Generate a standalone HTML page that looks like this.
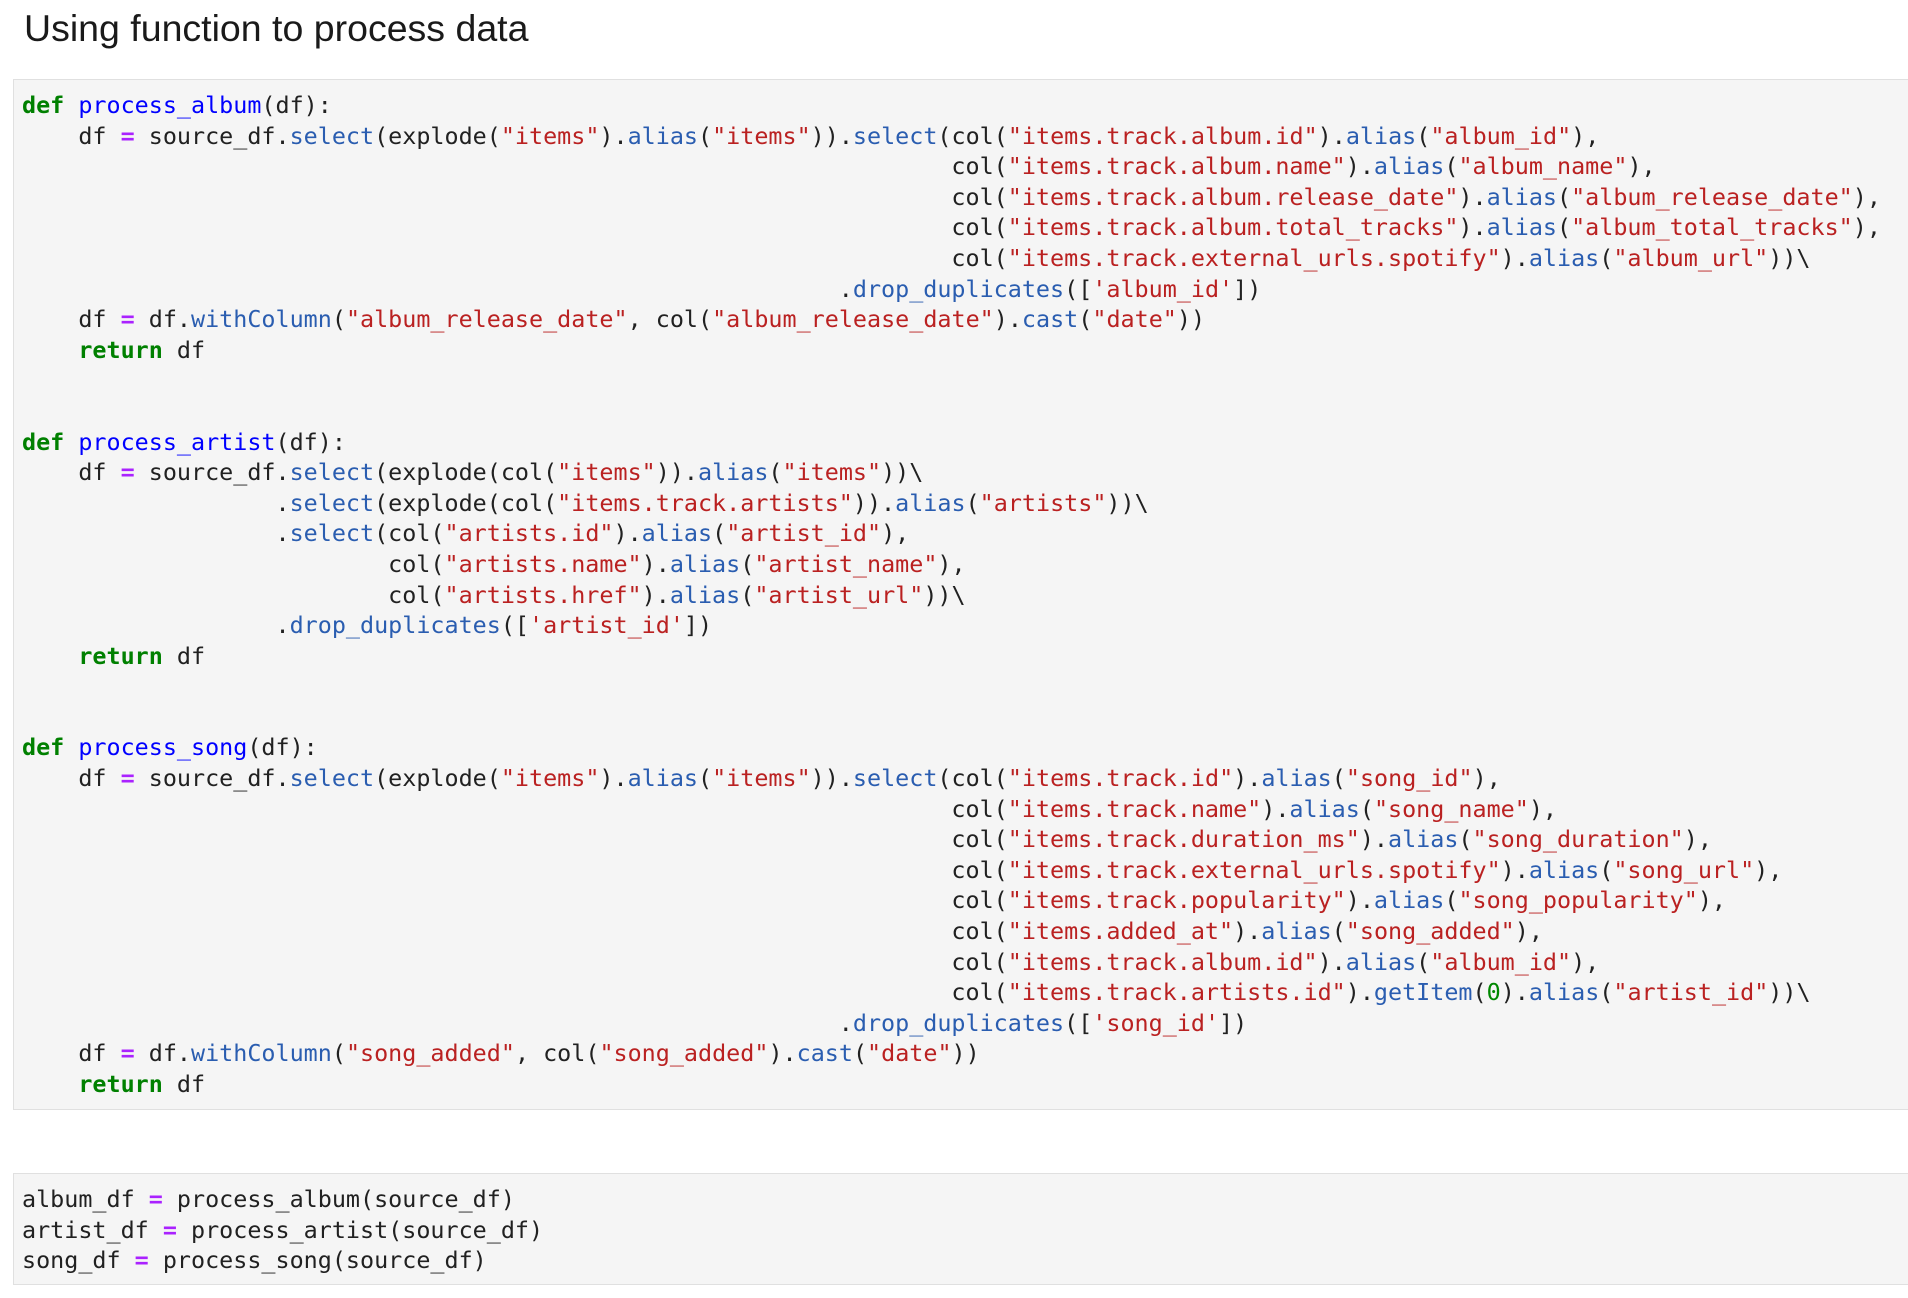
<!DOCTYPE html>
<html><head><meta charset="utf-8"><style>
html,body{margin:0;padding:0;background:#fff;width:1908px;height:1298px;overflow:hidden}
h2{position:absolute;left:24px;top:4px;margin:0;font:normal 37.5px/48px "Liberation Sans",sans-serif;color:#1a1a1a;letter-spacing:0px}
pre{position:absolute;left:13px;right:-10px;margin:0;background:#f5f5f5;border:1px solid #e0e0e0;font:23.4px/30.6px "DejaVu Sans Mono",monospace;color:#212121;padding:10px 0 0 8px;box-sizing:border-box;white-space:pre}
.k{color:#008000;font-weight:bold}.f{color:#0000ff}.s{color:#ba2121}.p{color:#2a5db0}.o{color:#aa22ff;font-weight:bold}.n{color:#008800}
</style></head><body>
<h2>Using function to process data</h2>
<pre style="top:79px;height:1031px"><span class="k">def</span> <span class="f">process_album</span>(df):
    df <span class="o">=</span> source_df.<span class="p">select</span>(explode(<span class="s">"items"</span>).<span class="p">alias</span>(<span class="s">"items"</span>)).<span class="p">select</span>(col(<span class="s">"items.track.album.id"</span>).<span class="p">alias</span>(<span class="s">"album_id"</span>),
                                                                  col(<span class="s">"items.track.album.name"</span>).<span class="p">alias</span>(<span class="s">"album_name"</span>),
                                                                  col(<span class="s">"items.track.album.release_date"</span>).<span class="p">alias</span>(<span class="s">"album_release_date"</span>),
                                                                  col(<span class="s">"items.track.album.total_tracks"</span>).<span class="p">alias</span>(<span class="s">"album_total_tracks"</span>),
                                                                  col(<span class="s">"items.track.external_urls.spotify"</span>).<span class="p">alias</span>(<span class="s">"album_url"</span>))\
                                                          .<span class="p">drop_duplicates</span>([<span class="s">'album_id'</span>])
    df <span class="o">=</span> df.<span class="p">withColumn</span>(<span class="s">"album_release_date"</span>, col(<span class="s">"album_release_date"</span>).<span class="p">cast</span>(<span class="s">"date"</span>))
    <span class="k">return</span> df


<span class="k">def</span> <span class="f">process_artist</span>(df):
    df <span class="o">=</span> source_df.<span class="p">select</span>(explode(col(<span class="s">"items"</span>)).<span class="p">alias</span>(<span class="s">"items"</span>))\
                  .<span class="p">select</span>(explode(col(<span class="s">"items.track.artists"</span>)).<span class="p">alias</span>(<span class="s">"artists"</span>))\
                  .<span class="p">select</span>(col(<span class="s">"artists.id"</span>).<span class="p">alias</span>(<span class="s">"artist_id"</span>),
                          col(<span class="s">"artists.name"</span>).<span class="p">alias</span>(<span class="s">"artist_name"</span>),
                          col(<span class="s">"artists.href"</span>).<span class="p">alias</span>(<span class="s">"artist_url"</span>))\
                  .<span class="p">drop_duplicates</span>([<span class="s">'artist_id'</span>])
    <span class="k">return</span> df


<span class="k">def</span> <span class="f">process_song</span>(df):
    df <span class="o">=</span> source_df.<span class="p">select</span>(explode(<span class="s">"items"</span>).<span class="p">alias</span>(<span class="s">"items"</span>)).<span class="p">select</span>(col(<span class="s">"items.track.id"</span>).<span class="p">alias</span>(<span class="s">"song_id"</span>),
                                                                  col(<span class="s">"items.track.name"</span>).<span class="p">alias</span>(<span class="s">"song_name"</span>),
                                                                  col(<span class="s">"items.track.duration_ms"</span>).<span class="p">alias</span>(<span class="s">"song_duration"</span>),
                                                                  col(<span class="s">"items.track.external_urls.spotify"</span>).<span class="p">alias</span>(<span class="s">"song_url"</span>),
                                                                  col(<span class="s">"items.track.popularity"</span>).<span class="p">alias</span>(<span class="s">"song_popularity"</span>),
                                                                  col(<span class="s">"items.added_at"</span>).<span class="p">alias</span>(<span class="s">"song_added"</span>),
                                                                  col(<span class="s">"items.track.album.id"</span>).<span class="p">alias</span>(<span class="s">"album_id"</span>),
                                                                  col(<span class="s">"items.track.artists.id"</span>).<span class="p">getItem</span>(<span class="n">0</span>).<span class="p">alias</span>(<span class="s">"artist_id"</span>))\
                                                          .<span class="p">drop_duplicates</span>([<span class="s">'song_id'</span>])
    df <span class="o">=</span> df.<span class="p">withColumn</span>(<span class="s">"song_added"</span>, col(<span class="s">"song_added"</span>).<span class="p">cast</span>(<span class="s">"date"</span>))
    <span class="k">return</span> df</pre>
<pre style="top:1173px;height:112px">album_df <span class="o">=</span> process_album(source_df)
artist_df <span class="o">=</span> process_artist(source_df)
song_df <span class="o">=</span> process_song(source_df)</pre>
</body></html>
